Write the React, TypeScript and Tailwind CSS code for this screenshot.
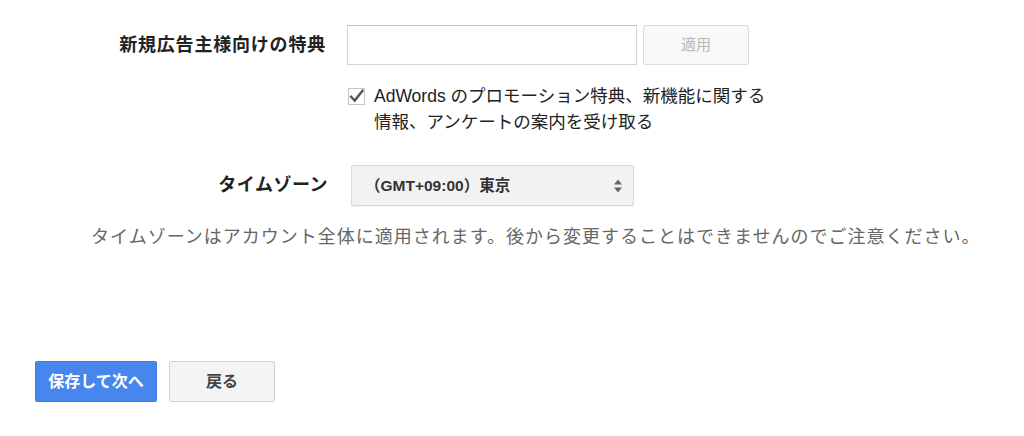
import React from "react";

const FONT = '"Liberation Sans", "Noto Sans CJK JP", sans-serif';

function CheckMark() {
  return (
    <span className="flex h-[17px] w-[17px] items-center justify-center border border-[#c6c6c6] bg-white">
      <svg width="15" height="15" viewBox="0 0 14 14">
        <path d="M2 7.2 L5.4 10.8 L12.6 1.6" fill="none" stroke="#555" strokeWidth="2.2" strokeLinecap="square" />
      </svg>
    </span>
  );
}

function UpDownArrows() {
  return (
    <svg width="10" height="16" viewBox="0 0 10 16">
      <path d="M1 6.5 L5 1.5 L9 6.5 Z" fill="#666" />
      <path d="M1 9.5 L5 14.5 L9 9.5 Z" fill="#666" />
    </svg>
  );
}

export default function App() {
  return (
    <div className="h-[436px] w-[1024px] overflow-hidden bg-white text-[#222]" style={{ fontFamily: FONT }}>
      {/* promo code row */}
      <div className="flex items-center pt-[25px]">
        <div className="w-[347px] pr-[21px] text-right text-[18px] font-bold tracking-[0.8px] text-[#222]">
          新規広告主様向けの特典
        </div>
        <div className="h-[40px] w-[290px] border border-[#d4d4d4] border-t-[#c0c0c0] bg-white" />
        <button className="ml-[6px] h-[40px] w-[106px] rounded-[2px] border border-[#dcdcdc] bg-[#f8f8f8] text-[15px] text-[#b8b8b8]">
          適用
        </button>
      </div>

      {/* newsletter opt-in */}
      <div className="mt-[18px] flex pl-[348px]">
        <div className="pt-[5px]">
          <CheckMark />
        </div>
        <div className="ml-[9px] text-[17.5px] leading-[26px] text-[#222]">
          <div>AdWords のプロモーション特典、新機能に関する</div>
          <div>情報、アンケートの案内を受け取る</div>
        </div>
      </div>

      {/* time zone row */}
      <div className="mt-[30px] flex items-center">
        <div className="w-[351px] pr-[23px] text-right text-[18px] font-bold tracking-[0.5px] text-[#222]">
          タイムゾーン
        </div>
        <div className="flex h-[41px] w-[283px] items-center justify-between rounded-[2px] border border-[#d9d9d9] bg-[#f2f2f2] pl-[13px] pr-[10px] shadow-[0_1px_1px_rgba(0,0,0,0.05)]">
          <span className="text-[15.5px] font-bold text-[#333]">（GMT+09:00）東京</span>
          <UpDownArrows />
        </div>
      </div>

      {/* time zone note */}
      <div className="mt-[18px] pl-[91px] text-[18px] leading-[26px] tracking-[1px] text-[#666]">
        タイムゾーンはアカウント全体に適用されます。後から変更することはできませんのでご注意ください。
      </div>

      {/* navigation buttons */}
      <div className="mt-[111px] flex gap-[12px] pl-[35px]">
        <button className="h-[41px] w-[122px] rounded-[2px] border border-[#3b7be6] bg-[#4787ed] text-[16px] font-bold text-white">
          保存して次へ
        </button>
        <button className="h-[41px] w-[106px] rounded-[2px] border border-[#d3d3d3] bg-[#f4f4f4] text-[16px] font-bold text-[#444]">
          戻る
        </button>
      </div>
    </div>
  );
}
